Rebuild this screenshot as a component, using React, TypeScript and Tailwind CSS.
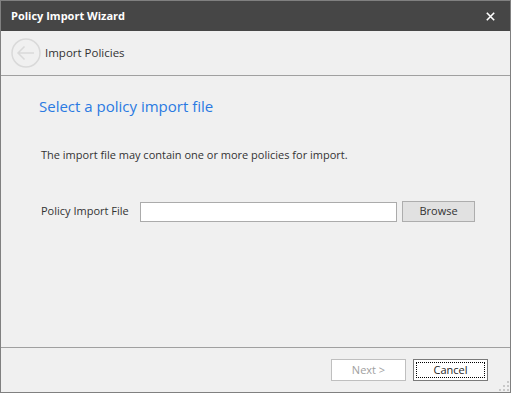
import React from "react";

export default function App() {
  const font = { fontFamily: '"Open Sans", "Noto Sans", sans-serif' };
  return (
    <div className="w-[511px] h-[393px] flex flex-col bg-[#f0f0f0] border border-[#808080] relative overflow-hidden" style={font}>
      {/* Title bar */}
      <div className="h-[30px] shrink-0 bg-[#464646] flex items-center justify-between pl-[10px] pr-[15px]">
        <span className="text-white font-bold text-[11px]">Policy Import Wizard</span>
        <svg width="9" height="9" viewBox="0 0 9 9">
          <path d="M0.8 0.8 L8.2 8.2 M8.2 0.8 L0.8 8.2" stroke="#ffffff" strokeWidth="1.6" />
        </svg>
      </div>
      {/* Header */}
      <div className="h-[45px] shrink-0 flex items-center border-b border-[#a0a0a0] pl-[10px]">
        <svg width="30" height="30" viewBox="0 0 30 30" className="shrink-0">
          <circle cx="15" cy="15" r="14" fill="none" stroke="#d9d9d9" strokeWidth="1.5" />
          <path d="M7 15 H23 M13.5 8.5 L7 15 L13.5 21.5" fill="none" stroke="#d9d9d9" strokeWidth="1.5" />
        </svg>
        <span className="ml-[4px] text-[11.5px] text-[#333333]">Import Policies</span>
      </div>
      {/* Content */}
      <div className="flex-1 flex flex-col pl-[38px] pt-[19px]">
        <div className="text-[15px] text-[#2a7ae2] leading-[22px]">Select a policy import file</div>
        <div className="mt-[30px] pl-[2px] text-[11px] text-[#333333] leading-[16px]">The import file may contain one or more policies for import.</div>
        <div className="mt-[38px] flex items-center pl-[2px]">
          <span className="w-[99px] text-[11px] text-[#333333]">Policy Import File</span>
          <div className="w-[257px] h-[20px] bg-white border border-[#ababab]" />
          <button className="ml-[5px] w-[73px] h-[21px] bg-[#e1e1e1] border border-[#adadad] text-[11px] text-[#333333] flex items-center justify-center">Browse</button>
        </div>
      </div>
      {/* Footer */}
      <div className="h-[45px] shrink-0 border-t border-[#a0a0a0] flex justify-end items-start pt-[11px] pr-[22px] gap-[7px]">
        <button className="w-[75px] h-[22px] bg-white border border-[#bfbfbf] text-[11px] text-[#a0a0a0] flex items-center justify-center">Next &gt;</button>
        <button className="w-[75px] h-[22px] bg-white border border-[#7a7a7a] text-[11px] text-[#1e1e1e] flex items-center justify-center p-[2px]">
          <span className="w-full h-full border border-dotted border-black flex items-center justify-center">Cancel</span>
        </button>
      </div>
      {/* Resize grip */}
      <svg width="10" height="10" viewBox="0 0 10 10" className="absolute right-[1px] bottom-[1px]">
        <rect x="8" y="0" width="2" height="2" fill="#c8c8c8" />
        <rect x="4" y="4" width="2" height="2" fill="#c8c8c8" />
        <rect x="8" y="4" width="2" height="2" fill="#c8c8c8" />
        <rect x="0" y="8" width="2" height="2" fill="#c8c8c8" />
        <rect x="4" y="8" width="2" height="2" fill="#c8c8c8" />
        <rect x="8" y="8" width="2" height="2" fill="#c8c8c8" />
      </svg>
    </div>
  );
}
